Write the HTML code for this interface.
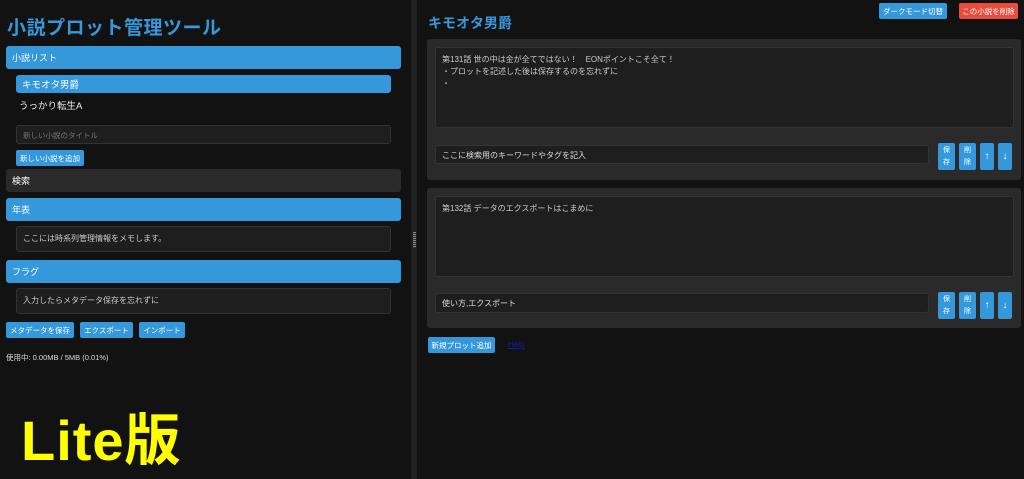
<!DOCTYPE html>
<html><head><meta charset="utf-8"><style>
*{box-sizing:border-box;margin:0;padding:0}
body{width:1024px;height:479px;background:#121212;font-family:"Liberation Sans","Noto Sans CJK JP",sans-serif;color:#ddd;position:relative;overflow:hidden}
.a{position:absolute}
.bar{background:#3498db;border-radius:3px;color:#fff;font-size:9px;padding-left:6px;display:flex;align-items:center}
.btn{background:#3498db;border-radius:2px;color:#fff;font-size:7.5px;display:flex;align-items:center;justify-content:center;white-space:nowrap}
.ta{background:#1e1e1e;border:1px solid #333;border-radius:3px;font-size:8px;color:#ccc;padding:6px 6px}
.card{background:#2a2a2a;border-radius:3px}
.sb{background:#3498db;border-radius:2px;color:#fff;font-size:7px;display:flex;align-items:center;justify-content:center;text-align:center;line-height:12px}
.ar{font-size:10px;font-weight:bold}
</style></head><body>
<div class="a" style="left:411px;top:0;width:6px;height:479px;background:#222"></div>
<div class="a" style="left:413px;top:232px;width:3px;height:16px;background:repeating-linear-gradient(#888 0 1px,#333 1px 2px)"></div>

<div class="a" style="left:7px;top:13px;font-size:19px;font-weight:bold;color:#3498db;letter-spacing:0.5px">小説プロット管理ツール</div>
<div class="a bar" style="left:6px;top:46px;width:395px;height:23px">小説リスト</div>
<div class="a bar" style="left:16px;top:75px;width:375px;height:18px;font-size:9.5px">キモオタ男爵</div>
<div class="a" style="left:19px;top:98px;font-size:9.5px;color:#eee">うっかり転生A</div>
<div class="a" style="left:16px;top:125px;width:375px;height:19px;background:#1e1e1e;border:1px solid #333;border-radius:3px;font-size:7.5px;color:#777;padding:4px 6px">新しい小説のタイトル</div>
<div class="a btn" style="left:16px;top:150px;width:68px;height:16px">新しい小説を追加</div>
<div class="a bar" style="left:6px;top:169px;width:395px;height:23px;background:#2a2a2a">検索</div>
<div class="a bar" style="left:6px;top:198px;width:395px;height:23px">年表</div>
<div class="a ta" style="left:16px;top:226px;width:375px;height:26px">ここには時系列管理情報をメモします。</div>
<div class="a bar" style="left:6px;top:260px;width:395px;height:23px">フラグ</div>
<div class="a ta" style="left:16px;top:288px;width:375px;height:26px">入力したらメタデータ保存を忘れずに</div>
<div class="a btn" style="left:6px;top:322px;width:68px;height:16px">メタデータを保存</div>
<div class="a btn" style="left:80px;top:322px;width:53px;height:16px">エクスポート</div>
<div class="a btn" style="left:139px;top:322px;width:46px;height:16px">インポート</div>
<div class="a" style="left:6px;top:352px;font-size:7.5px;color:#ddd">使用中: 0.00MB / 5MB (0.01%)</div>
<div class="a" style="left:21px;top:396px;font-size:56px;font-weight:bold;color:#ffff00;letter-spacing:1px">Lite版</div>

<div class="a" style="left:428px;top:13px;font-size:14px;font-weight:bold;color:#3498db">キモオタ男爵</div>
<div class="a btn" style="left:879px;top:3px;width:68px;height:16px">ダークモード切替</div>
<div class="a btn" style="left:959px;top:3px;width:59px;height:16px;background:#e74c3c">この小説を削除</div>

<div class="a card" style="left:427px;top:39px;width:594px;height:141px"></div>
<div class="a ta" style="left:435px;top:47px;width:579px;height:81px;line-height:12px">第131話 世の中は金が全てではない！　EONポイントこそ全て！<br>・プロットを記述した後は保存するのを忘れずに<br>・</div>
<div class="a ta" style="left:435px;top:145px;width:494px;height:19px;padding:4px 6px;color:#ddd">ここに検索用のキーワードやタグを記入</div>
<div class="a sb" style="left:938px;top:143px;width:17px;height:27px">保<br>存</div>
<div class="a sb" style="left:959px;top:143px;width:17px;height:27px">削<br>除</div>
<div class="a sb ar" style="left:980px;top:143px;width:14px;height:27px">↑</div>
<div class="a sb ar" style="left:998px;top:143px;width:14px;height:27px">↓</div>

<div class="a card" style="left:427px;top:188px;width:594px;height:140px"></div>
<div class="a ta" style="left:435px;top:196px;width:579px;height:81px;line-height:12px">第132話 データのエクスポートはこまめに</div>
<div class="a ta" style="left:435px;top:293px;width:494px;height:20px;padding:4px 6px;color:#ddd">使い方,エクスポート</div>
<div class="a sb" style="left:938px;top:292px;width:17px;height:27px">保<br>存</div>
<div class="a sb" style="left:959px;top:292px;width:17px;height:27px">削<br>除</div>
<div class="a sb ar" style="left:980px;top:292px;width:14px;height:27px">↑</div>
<div class="a sb ar" style="left:998px;top:292px;width:14px;height:27px">↓</div>

<div class="a btn" style="left:428px;top:337px;width:67px;height:16px">新規プロット追加</div>
<div class="a" style="left:508px;top:340px;font-size:8px;color:#1a1aa8;text-decoration:underline">Help</div>
</body></html>
